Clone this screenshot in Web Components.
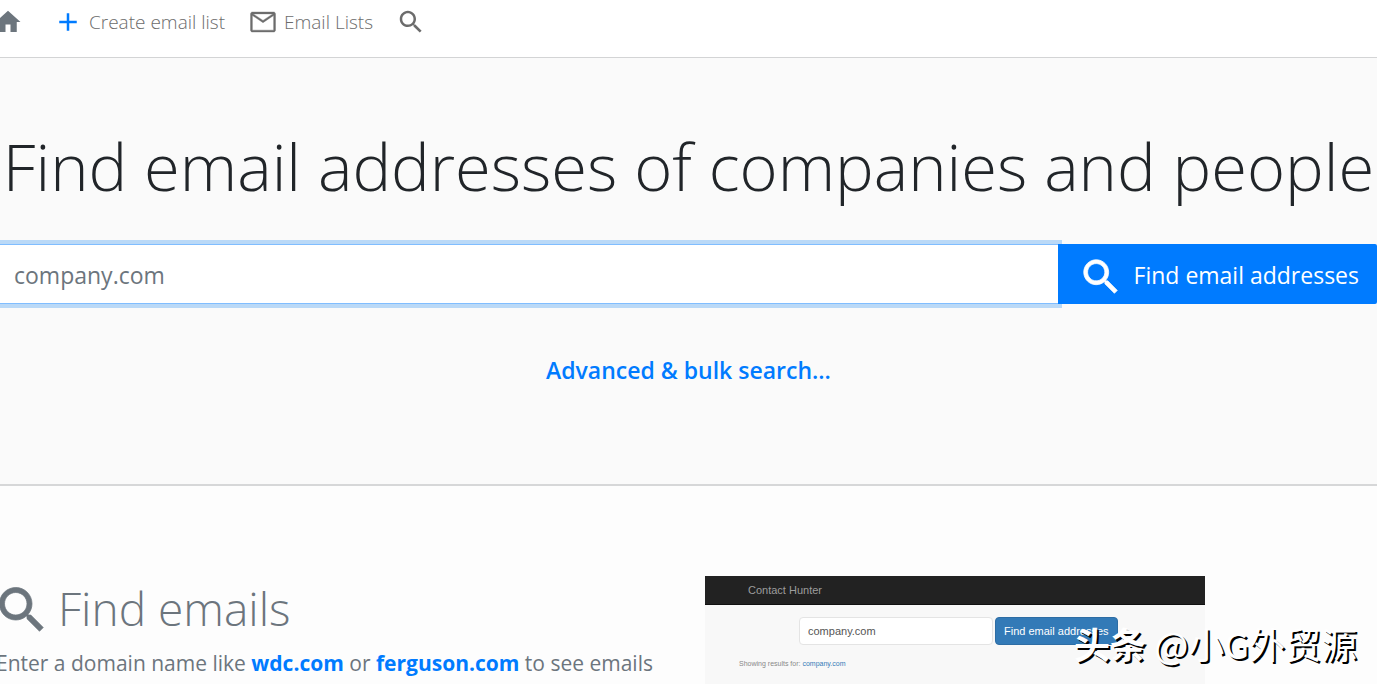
<!DOCTYPE html>
<html lang="en">
<head>
<meta charset="utf-8">
<meta name="viewport" content="width=device-width, initial-scale=1">
<title>Contact Hunter</title>
<style>
  body {
    margin: 0;
    overflow: hidden;
    font-family: "Open Sans", "Noto Sans", sans-serif;
    color: #212529;
    background-color: #fdfdfd;
  }
</style>
</head>
<body>
<contact-app></contact-app>
<script>
const icons = {
  home: 'M10 20v-6h4v6h5v-8h3L12 3 2 12h3v8z',
  add: 'M19 13h-6v6h-2v-6H5v-2h6V5h2v6h6v2z',
  mail: 'M20.500 4h-17C2.700 4 2 4.700 2 5.500v13c0 .8.7 1.500 1.500 1.500h17c.8 0 1.500-.7 1.500-1.500v-13c0-.8-.7-1.500-1.500-1.500zm0 14.500h-17V6.800L12 12.500l8.500-5.700v11.700zM12 10.700L4.200 5.500h15.600L12 10.700z',
  search: 'M15.5 14h-.79l-.28-.27C15.410 12.590 16 11.110 16 9.500 16 5.910 13.090 3 9.500 3S3 5.910 3 9.500 5.910 16 9.500 16c1.610 0 3.090-.590 4.230-1.570l.270.280v.790l5 4.990L20.490 19l-4.990-5zm-6 0C7.010 14 5 11.990 5 9.500S7.010 5 9.500 5 14 7.010 14 9.500 11.990 14 9.500 14z'
}

customElements.define('app-icon',
  /**
   * Represents an icon, picked by its name attribute.
   */
  class extends HTMLElement {
    /**
     * Creates an instance of the current type.
     */
    constructor () {
      super()
      this.attachShadow({ mode: 'open' })
    }

    /**
     * Called after the element is inserted into the DOM.
     */
    connectedCallback () {
      this.shadowRoot.innerHTML = `
        <style>
          :host {
            display: block;
            flex: none;
            width: var(--icon-size, 30px);
            height: var(--icon-size, 30px);
          }

          svg {
            display: block;
            width: 100%;
            height: 100%;
            fill: currentColor;
            stroke: currentColor;
            stroke-width: var(--icon-stroke, 0);
          }
        </style>
        <svg viewBox="0 0 24 24" aria-hidden="true"><path d="${icons[this.getAttribute('name')]}"/></svg>
      `
    }
  }
)

// Define template for the navigation.
const navTemplate = document.createElement('template')
navTemplate.innerHTML = `
<style>
  :host {
    display: block;
    background-color: #fff;
    border-bottom: 1px solid #d3d4d5;
  }

  nav {
    display: flex;
    align-items: center;
    gap: 23px;
    height: 44px;
    padding-bottom: 13px;
    margin-left: -7px;
  }

  a {
    display: flex;
    align-items: center;
    gap: 6px;
    font-size: 19px;
    font-weight: 300;
    line-height: 30px;
    color: #6c6c6c;
    text-decoration: none;
    white-space: nowrap;
  }

  .home {
    margin-right: 7px;
    color: #6c757d;
  }

  .add {
    color: #007bff;
  }

  .mail {
    --icon-stroke: 0.3;
  }
</style>
<nav>
  <a class="home" href="#" aria-label="Home"><app-icon name="home"></app-icon></a>
  <a href="#"><app-icon class="add" name="add"></app-icon>Create email list</a>
  <a href="#"><app-icon class="mail" name="mail"></app-icon>Email Lists</a>
  <a href="#" aria-label="Search"><app-icon name="search"></app-icon></a>
</nav>
`

customElements.define('site-nav',
  /**
   * Represents the top navigation.
   */
  class extends HTMLElement {
    /**
     * Creates an instance of the current type.
     */
    constructor () {
      super()
      this.attachShadow({ mode: 'open' })
      this.shadowRoot.appendChild(navTemplate.content.cloneNode(true))
    }
  }
)

// Define template for the domain search.
const searchTemplate = document.createElement('template')
searchTemplate.innerHTML = `
<style>
  :host {
    display: block;
  }

  form {
    display: flex;
  }

  input {
    flex: 1;
    min-width: 0;
    box-sizing: border-box;
    height: 60px;
    padding: 2px 14px 0;
    border: 1px solid #80bdff;
    border-width: 1px 0;
    border-radius: 0;
    outline: none;
    box-shadow: 0 0 0 4px #bad9f7;
    font: 400 23px "Open Sans", "Noto Sans", sans-serif;
    color: #495057;
    background-color: #fff;
  }

  input::placeholder {
    color: #6c757d;
    opacity: 1;
  }

  button {
    position: relative;
    display: flex;
    align-items: center;
    gap: 10px;
    height: 60px;
    padding: 2px 18px 0 20px;
    border: 0;
    border-radius: 0 2px 2px 0;
    font: 400 23px "Open Sans", "Noto Sans", sans-serif;
    color: #fff;
    background-color: #007bff;
    white-space: nowrap;
    --icon-size: 46px;
    --icon-stroke: 0.4;
  }

  app-icon {
    margin-top: 4px;
  }
</style>
<form>
  <input type="text" placeholder="company.com" aria-label="Domain name">
  <button type="button"><app-icon name="search"></app-icon>Find email addresses</button>
</form>
`

customElements.define('domain-search',
  /**
   * Represents the domain search.
   */
  class extends HTMLElement {
    /**
     * Creates an instance of the current type.
     */
    constructor () {
      super()
      this.attachShadow({ mode: 'open' })
      this.shadowRoot.appendChild(searchTemplate.content.cloneNode(true))
    }
  }
)

// Define template for the hero.
const heroTemplate = document.createElement('template')
heroTemplate.innerHTML = `
<style>
  :host {
    display: block;
    padding: 60px 0 96px;
    border-bottom: 2px solid #d6d7d8;
    background-color: #fafafa;
    text-align: center;
  }

  h1 {
    display: flex;
    justify-content: center;
    margin: 0 0 30px;
    font-size: 65px;
    font-weight: 300;
    line-height: 96px;
    white-space: nowrap;
  }

  a {
    display: inline-block;
    margin-top: 48px;
    font-size: 23px;
    font-weight: 600;
    line-height: 36px;
    color: #007bff;
    text-decoration: none;
  }
</style>
<h1><slot></slot></h1>
<domain-search></domain-search>
<a href="#">Advanced &amp; bulk search...</a>
`

customElements.define('search-hero',
  /**
   * Represents the hero with its heading and search.
   */
  class extends HTMLElement {
    /**
     * Creates an instance of the current type.
     */
    constructor () {
      super()
      this.attachShadow({ mode: 'open' })
      this.shadowRoot.appendChild(heroTemplate.content.cloneNode(true))
    }
  }
)

// Define template for the small preview of the result page.
const previewTemplate = document.createElement('template')
previewTemplate.innerHTML = `
<style>
  :host {
    display: block;
    max-width: 500px;
    min-height: 280px;
    background-color: #f8f8f8;
    font-family: "Liberation Sans", sans-serif;
    text-align: left;
  }

  header {
    padding-left: 43px;
    border-bottom: 1px solid #111;
    font-size: 11px;
    line-height: 28px;
    color: #9d9d9d;
    background-color: #222;
  }

  form {
    display: flex;
    gap: 2px;
    padding: 12px 0 0 94px;
  }

  input,
  button {
    box-sizing: border-box;
    height: 28px;
    padding: 0 8px;
    border: 1px solid #e4e4e4;
    border-radius: 4px;
    font: 11px "Liberation Sans", sans-serif;
  }

  input {
    width: 194px;
    color: #555;
    background-color: #fff;
  }

  button {
    border-color: #2e6da4;
    color: #fff;
    background-color: #337ab7;
    white-space: nowrap;
  }

  p {
    margin: 14px 0 0 34px;
    font-size: 7px;
    line-height: 10px;
    color: #888;
  }

  a {
    color: #337ab7;
    text-decoration: none;
  }
</style>
<header>Contact Hunter</header>
<form>
  <input type="text" value="company.com" aria-label="Company domain">
  <button type="button">Find email addresses</button>
</form>
<p>Showing results for: <a href="#">company.com</a></p>
`

customElements.define('result-preview',
  /**
   * Represents the preview of the result page.
   */
  class extends HTMLElement {
    /**
     * Creates an instance of the current type.
     */
    constructor () {
      super()
      this.attachShadow({ mode: 'open' })
      this.shadowRoot.appendChild(previewTemplate.content.cloneNode(true))
    }
  }
)

// Define template for a feature row.
const featureTemplate = document.createElement('template')
featureTemplate.innerHTML = `
<style>
  :host {
    display: grid;
    grid-template-columns: minmax(0, 1fr) minmax(0, 1fr);
    gap: 33px;
    padding-top: 90px;
    color: #6c757d;
  }

  h2 {
    display: flex;
    align-items: center;
    gap: 6px;
    margin: 0 0 8px -8px;
    font-size: 46px;
    font-weight: 300;
    line-height: 64px;
    --icon-size: 60px;
    --icon-stroke: 0.3;
  }

  app-icon {
    margin-top: 4px;
  }

  p {
    margin: 0 0 0 -4px;
    font-size: 21px;
    font-weight: 400;
    line-height: 30px;
    white-space: nowrap;
  }

  ::slotted(a) {
    font-weight: 700;
    color: #007bff;
    text-decoration: none;
  }
</style>
<div>
  <h2><app-icon name="search"></app-icon><slot name="title"></slot></h2>
  <p><slot></slot></p>
</div>
<slot name="preview"></slot>
`

customElements.define('feature-row',
  /**
   * Represents a feature with its text and preview.
   */
  class extends HTMLElement {
    /**
     * Creates an instance of the current type.
     */
    constructor () {
      super()
      this.attachShadow({ mode: 'open' })
      this.shadowRoot.appendChild(featureTemplate.content.cloneNode(true))
    }
  }
)

customElements.define('account-mark',
  /**
   * Represents the account name laid over the page corner.
   */
  class extends HTMLElement {
    /**
     * Creates an instance of the current type.
     */
    constructor () {
      super()
      this.attachShadow({ mode: 'open' })
      this.shadowRoot.innerHTML = `
        <style>
          :host {
            position: absolute;
            right: 20px;
            bottom: 17px;
            font: 400 36px/48px "Noto Sans CJK SC", sans-serif;
            color: #fff;
            text-shadow: 2px 2px 0 #000;
            white-space: nowrap;
          }

          ::slotted(b) {
            font-weight: 700;
          }
        </style>
        <slot></slot>
      `
    }
  }
)

// Define template for the whole page.
const appTemplate = document.createElement('template')
appTemplate.innerHTML = `
<style>
  :host {
    position: relative;
    display: block;
    height: 100vh;
    overflow: hidden;
  }
</style>
<site-nav></site-nav>
<search-hero>Find email addresses of companies and people</search-hero>
<feature-row>
  <span slot="title">Find emails</span>
  Enter a domain name like <a href="#">wdc.com</a> or <a href="#">ferguson.com</a> to see emails
  <result-preview slot="preview"></result-preview>
</feature-row>
<account-mark lang="zh-CN"><b>头条</b> @小G外贸源</account-mark>
`

customElements.define('contact-app',
  /**
   * Represents the page.
   */
  class extends HTMLElement {
    /**
     * Creates an instance of the current type.
     */
    constructor () {
      super()
      this.attachShadow({ mode: 'open' })
      this.shadowRoot.appendChild(appTemplate.content.cloneNode(true))
    }
  }
)
</script>
</body>
</html>
